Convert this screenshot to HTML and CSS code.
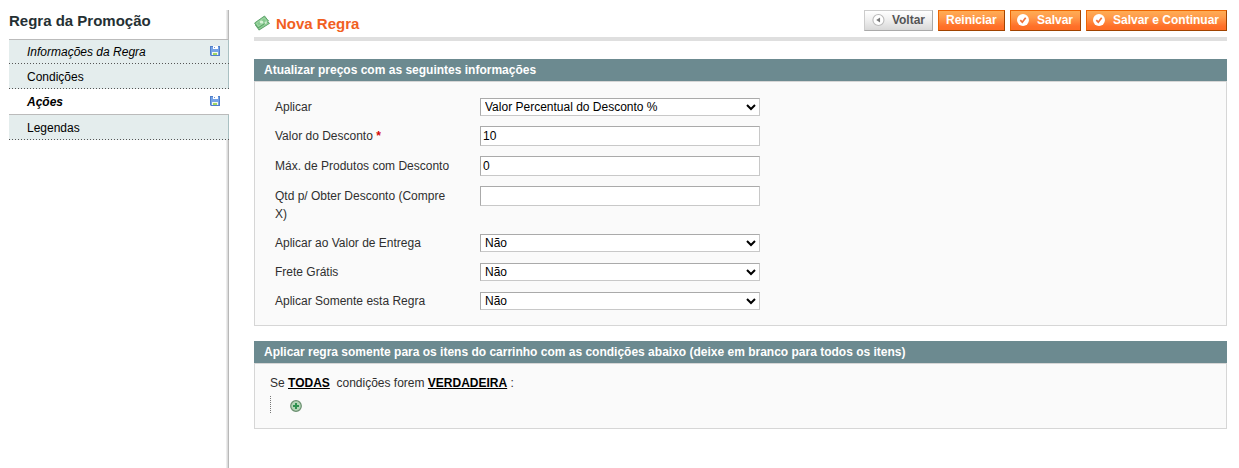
FILE: index.html
```html
<!DOCTYPE html>
<html lang="pt-BR">
<head>
<meta charset="utf-8">
<title>Nova Regra</title>
<link rel="stylesheet" href="styles.css">
</head>
<body>
<svg class="defs" width="0" height="0">
  <symbol id="disk" viewBox="0 0 10 10">
    <path d="M0 0h10v10H1L0 9z" fill="#4f7fca"/>
    <path d="M1 1h8v8H1z" fill="#76a3e6"/>
    <path d="M3 0h5v3H3z" fill="#fff"/><path d="M4 1h1v1H4z" fill="#6c94d4"/>
    <path d="M2 6h6v3H2z" fill="#f4f8ee"/><path d="M3 7h4v2H3z" fill="#a0d464"/>
  </symbol>
  <symbol id="check" viewBox="0 0 12 12">
    <circle cx="6" cy="6" r="6" fill="#fff"/>
    <path d="M3.3 6.2L5.3 8.2L8.7 3.8" fill="none" stroke="#f0703a" stroke-width="1.7"/>
  </symbol>
</svg>
<div class="page">
  <aside class="side">
    <h3>Regra da Promoção</h3>
    <ul class="tabs">
      <li class="tab changed"><span>Informações da Regra</span><svg width="10" height="10"><use href="#disk"/></svg></li>
      <li class="tab"><span>Condições</span></li>
      <li class="tab active"><span>Ações</span><svg width="10" height="10"><use href="#disk"/></svg></li>
      <li class="tab"><span>Legendas</span></li>
    </ul>
  </aside>
  <main class="main">
    <header class="head">
      <svg class="money" width="16" height="16" viewBox="0 0 16 16">
        <path d="M1 10L11 3.500L16 8.500L5 15.500z" fill="#4f975d"/>
        <path d="M2 11L11 5L15 8.500L5.200 14.500z" fill="#8ccb93"/>
        <path d="M0.600 8L10.500 1L14.500 6L4 13z" fill="#86c98f" stroke="#559c62" stroke-width=".9"/>
        <path d="M2.500 8L10 3L12.500 6L4.500 11.200z" fill="none" stroke="#aadcae" stroke-width=".7"/>
        <ellipse cx="7.500" cy="7" rx="1.800" ry="1.600" fill="#d8f2d7"/>
        <path d="M11 7l2.500-1-1 2.500-2 1z" fill="#d0ebd0"/>
      </svg>
      <h1>Nova Regra</h1>
      <div class="buttons">
        <button class="btn back"><svg width="14" height="14" viewBox="0 0 14 14"><circle cx="7" cy="7" r="6" fill="#fff" stroke="#bbb" stroke-width="1.200"/><path d="M8.800 4.300v5.400L4.600 7z" fill="#777"/></svg>Voltar</button>
        <button class="btn reset">Reiniciar</button>
        <button class="btn save"><svg width="12" height="12"><use href="#check"/></svg>Salvar</button>
        <button class="btn continue"><svg width="12" height="12"><use href="#check"/></svg>Salvar e Continuar</button>
      </div>
    </header>
    <section class="panel prices">
      <h4>Atualizar preços com as seguintes informações</h4>
      <div class="body form">
        <label>Aplicar</label><select><option>Valor Percentual do Desconto %</option></select>
        <label class="text-label">Valor do Desconto <b class="req">*</b></label><input type="text" value="10">
        <label class="text-label">Máx. de Produtos com Desconto</label><input type="text" value="0">
        <label class="text-label">Qtd p/ Obter Desconto (Compre X)</label><input type="text">
        <label>Aplicar ao Valor de Entrega</label><select><option>Não</option></select>
        <label>Frete Grátis</label><select><option>Não</option></select>
        <label>Aplicar Somente esta Regra</label><select><option>Não</option></select>
      </div>
    </section>
    <section class="panel">
      <h4>Aplicar regra somente para os itens do carrinho com as condições abaixo (deixe em branco para todos os itens)</h4>
      <div class="body rules">
        <p>Se <a>TODAS</a>&nbsp; condições forem <a>VERDADEIRA</a> :</p>
        <div class="children">
          <svg width="12" height="12" viewBox="0 0 12 12"><circle cx="6" cy="6" r="5.300" fill="#b5d6b7" stroke="#6b8f70" stroke-width="1.200"/><path d="M6 3v6M3 6h6" stroke="#2f9150" stroke-width="2"/></svg>
        </div>
      </div>
    </section>
  </main>
</div>
</body>
</html>
```
FILE: styles.css
```css
* { box-sizing: border-box; }
body { margin: 0; background: #fff; color: #2f2f2f; font: 12px/18px "Liberation Sans", Arial, sans-serif; }
h1, h3, h4, p, ul { margin: 0; padding: 0; }
.defs { position: absolute; }
.page { display: flex; height: 468px; padding: 10px 12px 0 9px; overflow: hidden; }

.side { width: 220px; background: linear-gradient(to right, #ececec 0 1px, #dcdcdc 1px 2px, #b8b8b8 2px) right / 3px 100% no-repeat; }
.side h3 { height: 29px; font-size: 15px; line-height: 22px; color: #253033; }
.tabs { list-style: none; border-top: 1px solid #bbb; }
.tab { display: flex; align-items: center; justify-content: space-between; height: 25px; padding: 0 9px 0 18px; border-right: 1px solid #a9c0c2; background: #e4eded; color: #000; position: relative; }
.tab:first-child { height: 24px; }
.tab::after { content: ""; position: absolute; left: 0; right: -1px; bottom: 0; height: 1px; background: repeating-linear-gradient(to right, #555 0 1px, transparent 1px 3px); }
.changed { font-style: italic; }
.tab svg { margin: 0 -1px 2px 0; }
.active { height: 26px; background: #fff; border-right: 0; border-bottom: 1px solid #bbb; font-weight: bold; font-style: italic; padding-right: 10px; }
.active svg { margin-bottom: 1px; }
.active::after { display: none; }

.main { flex: 1; margin-left: 25px; }
.head { display: flex; height: 31px; border-bottom: 4px solid #dfdfdf; }
.money { margin-top: 5px; }
h1 { margin-left: 6px; color: #f1601f; font-size: 15px; line-height: 27px; }
.buttons { display: flex; gap: 5px; margin-left: auto; }
.btn { display: flex; align-items: center; height: 21px; padding: 0 7px 1px; border: 1px solid; border-color: #ed6502 #a04300 #a04300 #ed6502; background: linear-gradient(#ffac53, #ff9a4a 35%, #ff7029 80%, #ff6c24); color: #fff; font: bold 12px/18px "Liberation Sans", Arial, sans-serif; white-space: nowrap; }
.back { width: 69px; border-color: #ccc #aaa #aaa #ccc; background: linear-gradient(#fff, #f0f0f0 45%, #d8d8d8); color: #555; gap: 7px; }
.reset { width: 67px; }
.save { width: 71px; gap: 8px; padding-left: 6px; }
.continue { width: 141px; gap: 8px; padding-left: 6px; }

.panel { margin-top: 15px; }
.prices { margin-top: 18px; }
h4 { height: 22px; padding-left: 10px; background: #6c8a90; color: #fff; font-size: 12px; line-height: 22px; }
.body { border: 1px solid #d6d6d6; background: #fafafa; }
.form { display: grid; grid-template-columns: 185px 280px; column-gap: 20px; grid-template-rows: 28px 30px 30px 48px 29px 29px 18px; height: 245px; padding: 16px 0 0 20px; }
.form label { padding-right: 5px; }
.form .text-label { padding-top: 1px; }
.req { color: #d40707; }
input, select { width: 280px; margin: 0; border: 1px solid; border-color: #aaa #c8c8c8 #c8c8c8 #aaa; border-radius: 0; background-color: #fff; color: #000; font: 12px "Liberation Sans", Arial, sans-serif; }
input { height: 20px; padding: 2px; }
select { height: 18px; padding: 0; }
.rules { height: 66px; padding: 10px 15px; }
.rules a { color: #000; font-weight: bold; text-decoration: underline; }
.children { display: flex; align-items: center; width: 60px; height: 18px; margin-top: 4px; padding: 1px 0 0 20px; background: repeating-linear-gradient(#777 0 1px, transparent 1px 2px) left / 1px 100% no-repeat; }
```
